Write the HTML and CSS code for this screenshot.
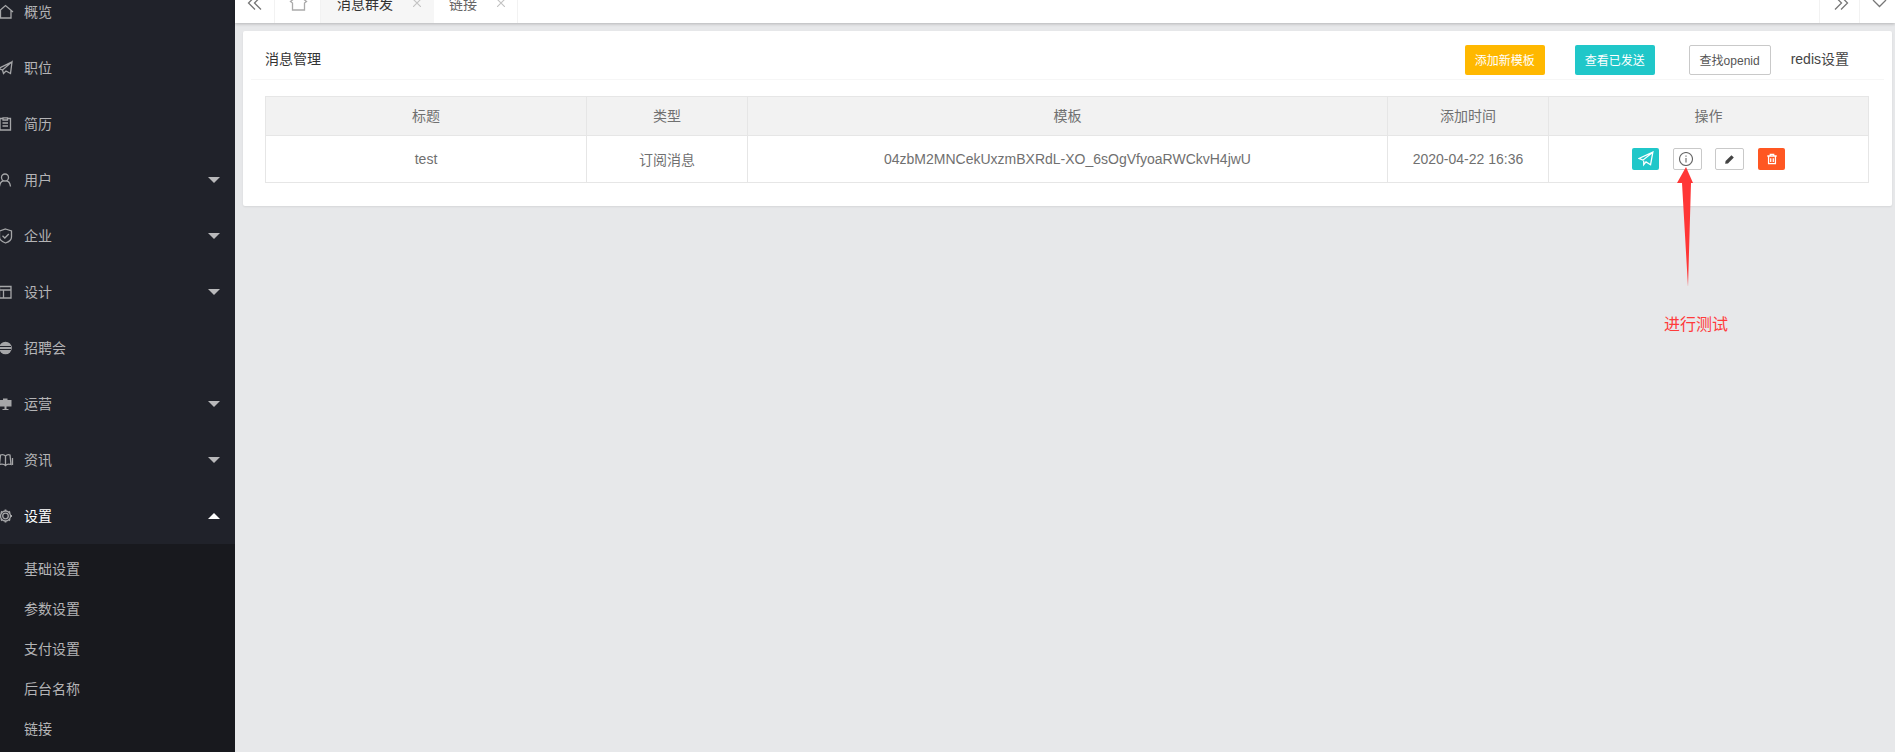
FILE: index.html
```html
<!DOCTYPE html>
<html lang="zh">
<head>
<meta charset="utf-8">
<title>消息管理</title>
<link rel="stylesheet" href="styles.css">
</head>
<body>
<div class="app">
  <aside class="side">
    <ul class="menu">
      <li class="item"><svg class="ico" viewBox="0 0 14 14"><path d="M-1 7 6.500 .5 14 7M1.500 5.500V13H12V5.500"/></svg><span>概览</span></li>
      <li class="item"><svg class="ico" viewBox="0 0 14 14"><path d="M13 .8-.5 7.500l4 1.500L13 .8 11.500 12.500 7 10l-2.500 2.500-1-3.500"/></svg><span>职位</span></li>
      <li class="item"><svg class="ico" viewBox="0 0 14 14"><path d="M4 1.500H1V13h10.500V1.500H8.500M4 .8h4.500V3H4zM3.500 6h5.500M3.500 9h5.500"/></svg><span>简历</span></li>
      <li class="item"><svg class="ico" viewBox="0 0 14 14"><circle cx="6" cy="4.500" r="3.500"/><path d="M.5 13.500C1 10 3 8 4.500 8M11.500 13.500C11 10 9 8 7.500 8"/></svg><span>用户</span><i class="caret"></i></li>
      <li class="item"><svg class="ico" viewBox="0 0 14 14"><path d="M6.500 0 12.500 2V8c0 3-3 5-6 6C3.500 13 .5 11 .5 8V2zM3.500 6.800 5.800 9 9.800 5"/></svg><span>企业</span><i class="caret"></i></li>
      <li class="item"><svg class="ico" viewBox="0 0 14 14"><path d="M.5 1.500H12V13H.5zM.5 5H12M4.500 5V13"/></svg><span>设计</span><i class="caret"></i></li>
      <li class="item"><svg class="ico" viewBox="0 0 14 14"><circle class="solid" cx="6.500" cy="7" r="6.300"/><path class="cut" d="M1 5.500H12M1 8.500H12"/></svg><span>招聘会</span></li>
      <li class="item"><svg class="ico" viewBox="0 0 14 14"><path class="solid" d="M0 3H4V1.500H8.500V3H12.500V9.500H7.500V12H9.500V13H3.500V12H5.500V9.500H0z"/></svg><span>运营</span><i class="caret"></i></li>
      <li class="item"><svg class="ico" viewBox="0 0 14 14"><path d="M6.500 3C5 1.500 3 1.500 1.500 2L.5 11.500C2.500 11 5 11 6.500 12.500 8 11 10.500 11 12 11.500L11 2C10 1.500 8 1.500 6.500 3zM6.500 3V12.500M13.500 5V12"/></svg><span>资讯</span><i class="caret"></i></li>
      <li class="item open"><svg class="ico" viewBox="0 0 14 14"><circle cx="6.500" cy="7" r="2.800"/><circle cx="6.500" cy="7" r="5"/><path class="dash" d="M6.500 .5V2M6.500 12V13.500M0 7H1.500M11.500 7H13M2 2.500 3 3.500M10 10.500 11 11.500M2 11.500 3 10.500M10 3.500 11 2.500"/></svg><span>设置</span><i class="caret up"></i></li>
      <li class="sub">
        <a>基础设置</a>
        <a>参数设置</a>
        <a>支付设置</a>
        <a>后台名称</a>
        <a>链接</a>
      </li>
    </ul>
  </aside>
  <main class="main">
    <header class="tabs">
      <div class="tbtn left"><svg class="tico" viewBox="0 0 16 16"><path d="M8 .5 1.500 7 8 13.500M14 .5 7.500 7 14 13.500"/></svg></div>
      <div class="tab home"><svg class="tico" viewBox="0 0 16 16"><path d="M3 3.500 .5 5.500 2.500 7V14H14.500V7L16.500 5.500 14 3.500"/></svg></div>
      <div class="tab active"><span>消息群发</span><svg class="x" viewBox="0 0 8 8"><path d="M0 0 8 8M8 0 0 8"/></svg></div>
      <div class="tab second"><span>链接</span><svg class="x" viewBox="0 0 8 8"><path d="M0 0 8 8M8 0 0 8"/></svg></div>
      <div class="spacer"></div>
      <div class="tbtn right"><svg class="tico" viewBox="0 0 16 16"><path d="M2 .5 8.500 7 2 13.500M8 .5 14.500 7 8 13.500"/></svg></div>
      <div class="tbtn down"><svg class="tico" viewBox="0 0 16 16"><path d="M0 1 6.500 7.500 13 1"/></svg></div>
    </header>
    <section class="body">
      <div class="card">
        <div class="head">
          <span class="title">消息管理</span>
          <span class="grow"></span>
          <a class="btn amber">添加新模板</a>
          <a class="btn teal">查看已发送</a>
          <a class="btn plain">查找openid</a>
          <span class="redis">redis设置</span>
        </div>
        <div class="tablewrap">
          <table>
            <colgroup><col class="c1"><col class="c2"><col class="c3"><col class="c4"><col class="c5"></colgroup>
            <thead><tr><th>标题</th><th>类型</th><th>模板</th><th>添加时间</th><th>操作</th></tr></thead>
            <tbody><tr>
              <td>test</td>
              <td>订阅消息</td>
              <td>04zbM2MNCekUxzmBXRdL-XO_6sOgVfyoaRWCkvH4jwU</td>
              <td>2020-04-22 16:36</td>
              <td><div class="acts">
                <a class="act send"><svg viewBox="0 0 14 14"><path d="M13 1 .8 6.500l3.500 1.500L13 1 11 12 7 9.500 5 12V8.500"/></svg></a>
                <a class="act info"><svg viewBox="0 0 14 14"><circle cx="7" cy="7" r="6.500"/><path d="M7 6V10.500M7 3.500V4.800"/></svg></a>
                <a class="act edit"><svg viewBox="0 0 14 14"><path class="fill" d="M9.500 1.500 12.500 4.500 5 12 1.500 12.500 2 9z"/></svg></a>
                <a class="act del"><svg viewBox="0 0 14 14"><path d="M1.500 3.500H12.500M5 3.500V1.500H9V3.500M3 3.500V12.500H11V3.500M5.500 6V10.500M8.500 6V10.500"/></svg></a>
              </div></td>
            </tr></tbody>
          </table>
        </div>
      </div>
    </section>
  </main>
</div>
<svg class="arrow" viewBox="0 0 30 125"><path d="M12 3 19 19H17L14 123 8 19H3z"/></svg>
<div class="note">进行测试</div>
</body>
</html>
```
FILE: styles.css
```css
* { box-sizing: border-box; }
html, body { margin: 0; height: 100%; overflow: hidden; }
body { font-family: "Liberation Sans", "Noto Sans CJK SC", sans-serif; font-size: 14px; color: #666; background: #e7e8ea; }
.app { display: flex; height: 752px; }

.side { width: 235px; flex: none; background: #20222a; overflow: hidden; }
.menu { list-style: none; margin: -16px 0 0; padding: 0; }
.item { height: 56px; display: flex; align-items: center; color: #b4b4b6; position: relative; }
.item span { margin-left: 10px; margin-bottom: 2px; }
.item.open { color: #fff; }
.ico { width: 14px; height: 14px; margin-left: -1px; margin-right: 1px; overflow: visible; flex: none; fill: none; stroke: #a5a6a8; stroke-width: 1.300; }
.ico .solid { fill: #a5a6a8; stroke: none; }
.ico .cut { stroke: #20222a; stroke-width: 1; }
.ico .dash { stroke-width: 1.800; }
.caret { position: absolute; left: 208px; top: 25px; width: 0; height: 0; border-left: 6px solid transparent; border-right: 6px solid transparent; border-top: 6px solid #b9b9bb; }
.caret.up { border-top: 0; border-bottom: 6px solid #fff; top: 25px; }
.sub { background: #18191e; height: 240px; padding-top: 5px; }
.sub a { display: flex; align-items: center; height: 40px; padding: 0 0 2px 24px; color: #b4b4b6; }

.main { flex: 1; min-width: 0; display: flex; flex-direction: column; }
.tabs { height: 23px; flex: none; display: flex; background: #fff; box-shadow: 0 1px 3px rgba(0,0,0,.22); overflow: hidden; position: relative; z-index: 1; }
.tbtn, .tab { height: 23px; display: flex; align-items: flex-end; border-right: 1px solid #f2f2f2; flex: none; position: relative; color: #555; }
.tico { width: 16px; height: 16px; margin-bottom: 11px; fill: none; stroke: #777; stroke-width: 1.300; overflow: visible; }
.tbtn.left { width: 40px; padding-left: 12px; }
.tab.home { width: 46px; padding-left: 15px; }
.tab.home .tico { stroke: #aaa; }
.tab.active { width: 113px; background: #f6f6f6; padding-left: 16px; border-right: 0; color: #333; }
.tab.second { width: 84px; padding-left: 15px; color: #666; }
.tab span { position: absolute; top: -6px; line-height: 20px; }
.x { position: absolute; top: -1px; width: 8px; height: 8px; fill: none; stroke: #c2c2c2; stroke-width: 1.100; }
.tab.active .x { left: 92px; }
.tab.second .x { left: 63px; }
.spacer { flex: 1; }
.tbtn.right { width: 40px; padding-left: 13px; border-left: 1px solid #f2f2f2; border-right: 0; }
.tbtn.down { width: 36px; padding-left: 13px; border-left: 1px solid #f2f2f2; border-right: 0; }
.tbtn.down .tico { margin-bottom: 8px; }

.body { flex: 1; padding: 8px 3px 0 8px; }
.card { background: #fff; height: 175px; border-radius: 2px; box-shadow: 0 1px 2px rgba(0,0,0,.08); padding: 0 8px; }
.head { height: 49px; padding: 9px 0 0 14px; border-bottom: 1px solid #f6f6f6; display: flex; align-items: center; color: #333; }
.head .title { font-size: 14px; margin-bottom: 3px; }
.grow { flex: 1; }
.btn { height: 30px; display: flex; align-items: center; justify-content: center; font-size: 12px; border-radius: 2px; }
.amber { width: 80px; background: #ffb800; color: #fff; }
.teal { width: 80px; background: #20c7c9; color: #fff; margin-left: 30px; }
.plain { width: 82px; border: 1px solid #c9c9c9; color: #555; margin-left: 34px; }
.redis { margin-left: 20px; margin-right: 35px; margin-bottom: 3px; color: #444; font-size: 14px; }
.tablewrap { padding: 16px 17px 0 14px; }
table { width: 1603px; table-layout: fixed; border-collapse: collapse; font-size: 14px; color: #707070; }
.c1 { width: 321px; } .c2 { width: 161px; } .c3 { width: 640px; } .c4 { width: 161px; } .c5 { width: 320px; }
th, td { border: 1px solid #e6e6e6; text-align: center; padding: 0; font-weight: 400; }
th { height: 39px; padding-bottom: 2px; background: #f2f2f2; }
td { height: 47px; }
.acts { display: flex; justify-content: flex-start; padding-left: 83px; gap: 14px; align-items: center; }
.act { height: 22px; width: 28px; display: flex; align-items: center; justify-content: center; border-radius: 2px; flex: none; }
.act svg { width: 14px; height: 14px; fill: none; stroke-width: 1.100; }
.send { width: 27px; background: #20c7c9; }
.send svg { width: 16px; height: 16px; stroke: #fff; }
.info, .edit { width: 29px; border: 1px solid #c9c9c9; }
.info { padding-right: 3px; margin-right: -1px; }
.info svg { stroke: #666; }
.edit svg { width: 11px; height: 11px; }
.edit .fill { fill: #444; stroke: none; }
.del { width: 27px; background: #ff5722; }
.del svg { width: 12px; height: 12px; stroke: #fff; stroke-width: 1.500; }

.arrow { position: absolute; left: 1674px; top: 164px; width: 30px; height: 125px; fill: #ff3636; }
.note { position: absolute; left: 1664px; top: 314px; font-size: 16px; line-height: 22px; color: #ff3b3b; }
```
